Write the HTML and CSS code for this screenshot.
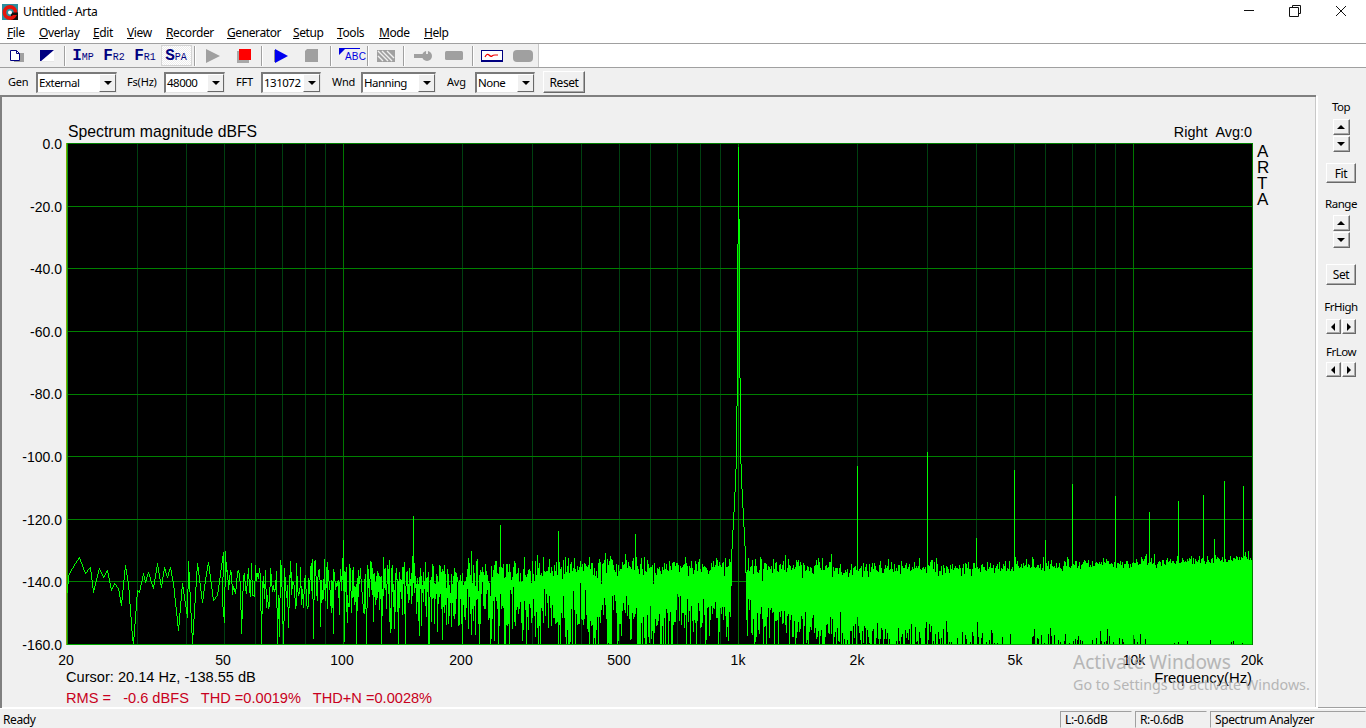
FILE: index.html
```html
<!DOCTYPE html>
<html lang="en">
<head>
<meta charset="utf-8">
<title>Untitled - Arta</title>
<link rel="stylesheet" href="styles.css">
</head>
<body>
<div class="window">
  <header class="titlebar">
    <svg class="appicon" width="16" height="16" viewBox="0 0 16 16"><rect width="16" height="16" fill="#2a8fa0"/><rect x="9" y="9" width="7" height="7" fill="#111"/><circle cx="8" cy="8.5" r="5.6" fill="none" stroke="#e8140c" stroke-width="3.6"/><path d="M10 8.5h6v2.5h-6z" fill="#111"/><circle cx="8" cy="8.5" r="2" fill="#fff"/></svg>
    <span class="title">Untitled - Arta</span>
    <div class="winctl">
      <span class="winbtn"><svg width="12" height="12" viewBox="0 0 12 12"><path d="M1 5.5h10" stroke="#111" fill="none"/></svg></span>
      <span class="winbtn"><svg width="12" height="12" viewBox="0 0 12 12"><path d="M3.5 2.5V.5h8v8h-2M.5 2.5h9v9h-9z" stroke="#111" fill="none"/></svg></span>
      <span class="winbtn"><svg width="12" height="12" viewBox="0 0 12 12"><path d="M1 1l10 10M11 1L1 11" stroke="#111" fill="none"/></svg></span>
    </div>
  </header>
  <nav class="menubar">
    <span class="m1"><u>F</u>ile</span><span class="m2"><u>O</u>verlay</span><span class="m3"><u>E</u>dit</span><span class="m4"><u>V</u>iew</span><span class="m5"><u>R</u>ecorder</span><span class="m6"><u>G</u>enerator</span><span class="m7"><u>S</u>etup</span><span class="m8"><u>T</u>ools</span><span class="m9"><u>M</u>ode</span><span><u>H</u>elp</span>
  </nav>
  <div class="toolbar">
    <div class="tools">
      <span class="tb tb-narrow"><svg width="15" height="12" viewBox="0 0 15 12"><path d="M4 3h10v9H4z" fill="#a0a0a0"/><path d="M.5.5h6l3 3v7h-9z" fill="#fff" stroke="#000080"/><path d="M6.5.5v3h3" fill="none" stroke="#000080"/></svg></span>
      <span class="tb tb-narrow"><svg width="14" height="12" viewBox="0 0 14 12"><rect width="14" height="12" fill="#fff"/><path d="M0 0h14L0 12z" fill="#000080"/><path d="M0 11.5h14" stroke="#e8e8e8"/></svg></span>
      <i class="sep sep7"></i>
      <span class="tb txt"><b>I</b><small>MP</small></span>
      <span class="tb txt"><b>F</b><small>R2</small></span>
      <span class="tb txt"><b>F</b><small>R1</small></span>
      <span class="tb txt on"><b>S</b><small>PA</small></span>
      <i class="sep sep5"></i>
      <span class="tb"><svg width="16" height="14" viewBox="0 0 16 14"><path d="M1 0l14 7-14 7z" fill="#a0a0a0"/></svg></span>
      <span class="tb"><svg width="14" height="14" viewBox="0 0 14 14"><path d="M0 2h12v12H0z" fill="#a8a8a8"/><path d="M2 0h12v11H2z" fill="#f00"/></svg></span>
      <i class="sep sep6"></i>
      <span class="tb"><svg width="15" height="14" viewBox="0 0 15 14"><path d="M1 1h1v12H1z" fill="#909090"/><path d="M2 0l13 7-13 7z" fill="#0000f0"/></svg></span>
      <span class="tb"><svg width="13" height="13" viewBox="0 0 13 13"><path d="M2 0h11v13H0V2z" fill="#a0a0a0"/></svg></span>
      <i class="sep sep7"></i>
      <span class="tb abc"><svg width="21" height="15" viewBox="0 0 21 15"><path d="M0 0h21v1H6L0 7z" fill="#0000e0"/></svg><em>ABC</em></span>
      <i class="sep sep5"></i>
      <span class="tb"><svg width="18" height="12" viewBox="0 0 18 12"><rect width="18" height="12" fill="#a0a0a0"/><path d="M1 1l10 10M5 1l10 10M10 1l7 7M1 6l5 5" stroke="#f0f0f0" stroke-width="1.4" fill="none"/></svg></span>
      <i class="sep sep6"></i>
      <span class="tb"><svg width="18" height="10" viewBox="0 0 18 10"><rect y="3" width="12" height="4" fill="#a0a0a0"/><circle cx="13" cy="5" r="5" fill="#a0a0a0"/><rect x="12" y="0" width="2" height="3" fill="#e8e8e8"/></svg></span>
      <span class="tb"><svg width="18" height="9" viewBox="0 0 18 9"><rect width="18" height="9" rx="1.5" fill="#a0a0a0"/></svg></span>
      <i class="sep sep7"></i>
      <span class="tb"><svg width="22" height="12" viewBox="0 0 22 12"><rect x=".5" y=".5" width="21" height="10" fill="#fff" stroke="#000080"/><path d="M0 11.5h22" stroke="#000080"/><path d="M4 7q2-4 4-2t3 1 3-1 3 0" stroke="#f00000" fill="none" stroke-width="1.2"/></svg></span>
      <span class="tb"><svg width="20" height="12" viewBox="0 0 20 12"><rect width="20" height="12" rx="4" fill="#a0a0a0"/></svg></span>
    </div>
  </div>
  <div class="options">
    <label class="lb l-gen">Gen</label>
    <div class="combo c-gen"><span>External</span><i class="drop"></i></div>
    <label class="lb l-fs">Fs(Hz)</label>
    <div class="combo c-fs"><span>48000</span><i class="drop"></i></div>
    <label class="lb l-fft">FFT</label>
    <div class="combo c-fft"><span>131072</span><i class="drop"></i></div>
    <label class="lb l-wnd">Wnd</label>
    <div class="combo c-wnd"><span>Hanning</span><i class="drop"></i></div>
    <label class="lb l-avg">Avg</label>
    <div class="combo c-avg"><span>None</span><i class="drop"></i></div>
    <button class="btn reset">Reset</button>
  </div>
  <main class="main">
    <section class="chart">
      <div class="ctitle">Spectrum magnitude dBFS</div>
      <div class="cright">Right&nbsp;&nbsp;Avg:0</div>
      <canvas id="plot" class="plot" width="1187" height="502"></canvas>
      <div class="arta"><span>A</span><span>R</span><span>T</span><span>A</span></div>
      <div class="ylab" style="top:143px">0.0</div>
      <div class="ylab" style="top:206px">-20.0</div>
      <div class="ylab" style="top:268px">-40.0</div>
      <div class="ylab" style="top:331px">-60.0</div>
      <div class="ylab" style="top:393px">-80.0</div>
      <div class="ylab" style="top:456px">-100.0</div>
      <div class="ylab" style="top:519px">-120.0</div>
      <div class="ylab" style="top:581px">-140.0</div>
      <div class="ylab" style="top:644px">-160.0</div>
      <div class="xlab" style="left:66px">20</div>
      <div class="xlab" style="left:223px">50</div>
      <div class="xlab" style="left:342px">100</div>
      <div class="xlab" style="left:461px">200</div>
      <div class="xlab" style="left:619px">500</div>
      <div class="xlab" style="left:738px">1k</div>
      <div class="xlab" style="left:857px">2k</div>
      <div class="xlab" style="left:1015px">5k</div>
      <div class="xlab" style="left:1134px">10k</div>
      <div class="xlab" style="left:1252px">20k</div>
      <div class="cursor">Cursor: 20.14 Hz, -138.55 dB</div>
      <div class="rms">RMS =   -0.6 dBFS   THD =0.0019%   THD+N =0.0028%</div>
      <div class="freq">Frequency(Hz)</div>
      <div class="wm1">Activate Windows</div>
      <div class="wm2">Go to Settings to activate Windows.</div>
    </section>
    <aside class="side">
      <div class="slab s-top">Top</div>
      <button class="btn spin sp1"><i class="up"></i></button>
      <button class="btn spin sp2"><i class="down"></i></button>
      <button class="btn wide fit">Fit</button>
      <div class="slab s-range">Range</div>
      <button class="btn spin sp3"><i class="up"></i></button>
      <button class="btn spin sp2"><i class="down"></i></button>
      <button class="btn wide set">Set</button>
      <div class="slab s-high">FrHigh</div>
      <div class="pair p-high"><button class="btn hs"><i class="left"></i></button><button class="btn hs"><i class="right"></i></button></div>
      <div class="slab s-low">FrLow</div>
      <div class="pair p-low"><button class="btn hs"><i class="left"></i></button><button class="btn hs"><i class="right"></i></button></div>
    </aside>
  </main>
  <footer class="status">
    <span class="ready">Ready</span>
    <span class="pane p-l">L:-0.6dB</span>
    <span class="pane p-r">R:-0.6dB</span>
    <span class="pane p-s">Spectrum Analyzer</span>
  </footer>
</div>
<script src="spectrum.js"></script>
</body>
</html>
```
FILE: styles.css
```css
* { box-sizing: border-box; }
html, body { margin: 0; padding: 0; }
body { background: #f0f0f0; overflow: hidden; font: 12px "Noto Sans", "Open Sans", sans-serif; letter-spacing: -.4px; color: #000; }
.window { width: 1366px; height: 728px; display: flex; flex-direction: column; overflow: hidden; }

.titlebar { height: 23px; background: #fff; display: flex; align-items: center; flex: none; }
.appicon { margin: 0 0 0 2px; flex: none; }
.title { margin-left: 5px; color: #000; letter-spacing: -.3px; }
.winctl { margin-left: auto; margin-right: 2px; display: flex; align-self: flex-start; }
.winbtn { width: 46px; height: 21px; display: flex; align-items: center; justify-content: center; }

.menubar { height: 20px; background: #fff; display: flex; align-items: center; padding-left: 7px; flex: none; line-height: 20px; }
.m1 { width: 32px; } .m2 { width: 54px; } .m3 { width: 34px; } .m4 { width: 39px; } .m5 { width: 61px; }
.m6 { width: 66px; } .m7 { width: 44px; } .m8 { width: 42px; } .m9 { width: 45px; }

.toolbar { height: 25px; flex: none; background: #fff; border-top: 1px solid #a0a0a0; border-bottom: 1px solid #a0a0a0; }
.tools { width: 539px; height: 23px; background: #f0f0f0; border-right: 1px solid #c8c8c8; display: flex; align-items: center; padding-left: 3px; }
.tb { width: 31px; height: 21px; display: flex; align-items: center; justify-content: center; flex: none; }
.tb-narrow { width: 29px; }
.sep { height: 20px; flex: none; background: linear-gradient(90deg, #a0a0a0 1px, #fff 1px) center / 2px 100% no-repeat; }
.sep5 { width: 5px; } .sep6 { width: 6px; } .sep7 { width: 7px; }
.txt { color: #000080; font-family: "Liberation Mono", monospace; align-items: baseline; letter-spacing: 0; padding: 2px 1px 0 0; }
.txt b { font-size: 16px; line-height: 18px; font-weight: 700; }
.txt small { font-size: 10px; font-weight: 400; margin-left: 0; letter-spacing: 0; }
.on { background: repeating-conic-gradient(#fff 0 25%, #ececec 0 50%) 0 0 / 2px 2px; outline: 1px solid #d4d4d4; outline-offset: -1px; }
.abc { position: relative; }
.abc em { position: absolute; left: 11px; top: 6px; font: 400 10px/12px "Liberation Sans", sans-serif; color: #0000e0; letter-spacing: .2px; }

.options { height: 28px; flex: none; display: flex; align-items: center; background: #f0f0f0; position: relative; }
.lb { flex: none; line-height: 16px; margin-top: 0; font-size: 11px; letter-spacing: -.2px; }
.l-gen { width: 28px; margin-left: 8px; }
.l-fs { width: 37px; margin-left: 10px; }
.l-fft { width: 25px; margin-left: 11px; }
.l-wnd { width: 29px; margin-left: 11px; }
.l-avg { width: 28px; margin-left: 11px; }
.combo { height: 21px; flex: none; background: #fff; border-style: solid; border-width: 2px 1px 1px 2px; border-color: #7a7a7a #e4e4e4 #e4e4e4 #7a7a7a; display: flex; align-items: center; justify-content: space-between; padding-left: 1px; font-size: 11.5px; letter-spacing: -.5px; }
.c-gen { width: 81px; } .c-fs { width: 61px; } .c-fft { width: 60px; } .c-wnd { width: 75px; } .c-avg { width: 60px; }
.drop { width: 17px; height: 18px; background: #f0f0f0; border: 1px solid; border-color: #fff #696969 #696969 #fff; display: flex; align-items: center; justify-content: center; }
.drop::after { content: ""; border: 4px solid transparent; border-top: 4px solid #000; border-bottom: 0; }

.btn { background: #f0f0f0; border: 1px solid; border-color: #fff #696969 #696969 #fff; box-shadow: inset -1px -1px 0 #a8a8a8; font: inherit; letter-spacing: inherit; color: #000; padding: 0; display: flex; align-items: center; justify-content: center; flex: none; }
.reset { width: 42px; height: 22px; margin-left: 8px; }
.spin { width: 17px; height: 16px; }
.wide { width: 30px; }
.fit { height: 20px; margin-top: 11px; }
.set { height: 21px; margin-top: 16px; }
.sp1 { margin-top: 4px; } .sp2 { margin-top: 1px; } .sp3 { margin-top: 3px; }
.up, .down, .left, .right { display: block; width: 0; height: 0; border: 4px solid transparent; }
.up { border-bottom-color: #000; border-top: 0; }
.down { border-top-color: #000; border-bottom: 0; }
.left { border-right-color: #000; border-left: 0; }
.right { border-left-color: #000; border-right: 0; }

.main { flex: 1; display: flex; min-height: 0; }
.chart { flex: 1; position: relative; box-shadow: inset 2px 2px 0 #808080, inset 0 -1px 0 #fff; font: 14px/16px "Liberation Sans", Arial, sans-serif; letter-spacing: 0; color: #000; margin-top: -1px; }
.plot { position: absolute; left: 66px; top: 48px; display: block; }
.ctitle { position: absolute; left: 68px; top: 28px; font-size: 15.75px; line-height: 18px; }
.cright { position: absolute; right: 64px; top: 29px; font-size: 14.4px; }
.arta { position: absolute; left: 1257px; top: 49px; font-size: 17px; line-height: 16px; display: flex; flex-direction: column; }
.ylab { position: absolute; right: 1254px; margin-top: -102px; white-space: nowrap; }
.xlab { position: absolute; top: 557px; transform: translateX(-50%); }
.cursor { position: absolute; left: 66px; top: 574px; font-size: 14.6px; }
.rms { position: absolute; left: 66px; top: 595px; color: #c80020; white-space: pre; font-size: 14.6px; }
.freq { position: absolute; right: 64px; top: 575px; z-index: 1; font-size: 14.8px; }
.wm1 { position: absolute; left: 1073px; top: 555px; font: 19.1px/24px "Noto Sans", sans-serif; color: #a8a8a8; opacity: .8; z-index: 2; white-space: nowrap; }
.wm2 { position: absolute; left: 1073px; top: 580px; font: 14.3px/20px "Noto Sans", sans-serif; color: #a8a8a8; opacity: .8; z-index: 2; white-space: nowrap; }

.side { width: 50px; flex: none; border-left: 2px solid #fff; box-shadow: -1px 0 0 #c8c8c8, inset 0 -1px 0 #a0a0a0; display: flex; flex-direction: column; align-items: center; padding: 3px 2px 0 0; }
.slab { height: 16px; line-height: 16px; white-space: nowrap; font-size: 11.5px; letter-spacing: -.5px; flex: none; }
.s-range { margin-top: 13px; }
.s-high { margin-top: 14px; }
.s-low { margin-top: 10px; }
.pair { display: flex; gap: 1px; height: 15px; flex: none; }
.p-high { margin-top: 4px; }
.p-low { margin-top: 2px; }
.hs { width: 14.5px; height: 15px; }

.status { height: 20px; flex: none; border-top: 1px solid #fff; display: flex; align-items: center; }
.ready { margin: 1px auto 0 3px; }
.pane { height: 17px; margin-top: 2px; margin-right: 3px; border: 1px solid; border-color: #a0a0a0 #f0f0f0 #f0f0f0 #a0a0a0; line-height: 15px; padding-left: 4px; }
.p-l, .p-r { width: 72px; }
.p-s { width: 156px; margin-right: 0; }
```
FILE: spectrum.js
```js
(function () {
  var W = 1187, H = 502, X0 = 66, Y0 = 143;
  var c = document.getElementById('plot').getContext('2d');
  var img = c.createImageData(W, H), d = img.data;

  function put(x, y, r, g, b) {
    if (x < 0 || y < 0 || x >= W || y >= H) return;
    var i = (y * W + x) * 4;
    d[i] = r; d[i + 1] = g; d[i + 2] = b; d[i + 3] = 255;
  }
  for (var i = 0; i < d.length; i += 4) { d[i + 3] = 255; }

  function xOf(f) { return 67 + 395 * Math.log(f / 20) / Math.LN10; }
  function yOf(db) { return 143 + (-db) / 160 * 501; }

  // vertical grid
  [20, 30, 40, 50, 60, 70, 80, 90, 100, 200, 300, 400, 500, 600, 700, 800, 900, 1000,
   2000, 3000, 4000, 5000, 6000, 7000, 8000, 9000, 10000, 20000].forEach(function (f) {
    var x = Math.round(xOf(f)) - X0;
    var major = f === 100 || f === 1000 || f === 10000 || f === 20000;
    for (var y = 0; y < H; y++) { major ? put(x, y, 0, 120, 0) : put(x, y, 0, 64, 16); }
  });
  // horizontal grid
  for (var k = 0; k <= 8; k++) {
    var hy = Math.round(yOf(-20 * k)) - Y0;
    for (var hx = 0; hx < W; hx++) { put(hx, hy, 0, k === 8 ? 170 : 128, 0); }
  }
  for (var ly = 0; ly < H; ly++) { put(0, ly, 120, 176, 0); put(1, ly, 16, 150, 16); }

  function line(x0, y0, x1, y1) {
    x0 = Math.round(x0) - X0; x1 = Math.round(x1) - X0;
    y0 = Math.min(643, Math.round(y0)) - Y0; y1 = Math.min(643, Math.round(y1)) - Y0;
    if (x0 === x1) {
      var a = Math.min(y0, y1), b = Math.max(y0, y1);
      for (var yy = a; yy <= b; yy++) put(x0, yy, 0, 255, 0);
      return;
    }
    var dx = Math.abs(x1 - x0), dy = Math.abs(y1 - y0), sx = x0 < x1 ? 1 : -1, sy = y0 < y1 ? 1 : -1, err = dx - dy;
    for (;;) {
      put(x0, y0, 0, 255, 0);
      if (x0 === x1 && y0 === y1) break;
      var e2 = 2 * err;
      if (e2 > -dy) { err -= dy; x0 += sx; }
      if (e2 < dx) { err += dx; y0 += sy; }
    }
  }

  // seeded generator
  var s = 20240611;
  function rnd() {
    s |= 0; s = s + 0x6D2B79F5 | 0;
    var t = Math.imul(s ^ s >>> 15, 1 | s);
    t = t + Math.imul(t ^ t >>> 7, 61 | t) ^ t;
    return ((t ^ t >>> 14) >>> 0) / 4294967296;
  }
  function gauss() { return Math.sqrt(-2 * Math.log(rnd() + 1e-12)) * Math.cos(6.283185 * rnd()); }

  // low-frequency part of the trace, read from the reference
  var low = [200,155,205,105,225,70,238,50,255,98,270,80,280,155,298,85,308,110,320,90,333,150,342,130,355,145,362,195,375,75,385,130,395,290,400,310,405,230,410,150,418,155,428,100,435,125,445,95,458,145,470,70,482,140,492,80,500,110,510,80,520,130,535,270,545,130,560,230,565,62,575,310,590,70,605,185,615,120,625,65,640,180,650,165,670,35];
  var px = low[0] / 3, py = 540 + low[1] / 3;
  for (var j = 2; j < low.length; j += 2) {
    var nx = low[j] / 3, ny = 540 + low[j + 1] / 3;
    line(px, py, nx, ny);
    px = nx; py = ny;
  }

  var df = 48000 / 131072;
  var k0 = Math.floor(49.8 / df), k1 = Math.ceil(20000 / df);
  var n = k1 - k0 + 3, re = new Float32Array(n), im = new Float32Array(n);
  for (var q = 0; q < n; q++) { re[q] = gauss(); im[q] = gauss(); }

  var spikes = {};
  [[2000,466],[3000,452],[4000,538],[5000,470],[6000,540],[7000,484],[9000,496],[11000,512],[13000,501],
   [15000,495],[16000,539],[17000,481],[19000,486],[150,516],[250,525],[350,531],[548,534],[100,540],[50,551]
  ].forEach(function (p) { spikes[Math.round(p[0] / df)] = p[1]; });

  var mx = [[20,-139.5],[700,-139.5],[1000,-140],[2000,-142],[5000,-142],[10000,-141.5],[20000,-140.5]];
  function mean(f) {
    for (var m = 1; m < mx.length; m++) {
      if (f <= mx[m][0]) {
        var t = (Math.log(f) - Math.log(mx[m - 1][0])) / (Math.log(mx[m][0]) - Math.log(mx[m - 1][0]));
        return mx[m - 1][1] + t * (mx[m][1] - mx[m - 1][1]);
      }
    }
    return -140;
  }
  var sk = [[0,0],[.55,-31],[1.2,-62],[1.8,-96],[3,-108],[5,-120],[7,-132],[7.6,-139]];
  function skirt(dx) {
    var a = Math.abs(dx);
    for (var m = 1; m < sk.length; m++) {
      if (a <= sk[m][0]) return sk[m - 1][1] + (a - sk[m - 1][0]) / (sk[m][0] - sk[m - 1][0]) * (sk[m][1] - sk[m - 1][1]);
    }
    return -300;
  }

  for (var b = k0; b < k1; b++) {
    var o = b - k0 + 1;
    var f = b * df, x = xOf(f), off = x - xOf(1000);
    var db;
    if (Math.abs(off) < 7.6) {
      db = skirt(off);
    } else {
      var rel = 10 * Math.log((re[o] * re[o] + im[o] * im[o]) / 2 + 1e-9) / Math.LN10;
      // deeper low tail below 700 Hz, as in the measurement
      db = mean(f) + (rel < 0 ? rel * (f < 700 ? 1.3 : 0.95) : rel);
    }
    var y = yOf(db);
    if (spikes[b]) y = spikes[b];
    line(px, py, x, y);
    px = x; py = y;
  }
  // right frame line
  for (var ry = 0; ry < H; ry++) put(1186, ry, 0, 128, 0);
  c.putImageData(img, 0, 0);
})();
```
